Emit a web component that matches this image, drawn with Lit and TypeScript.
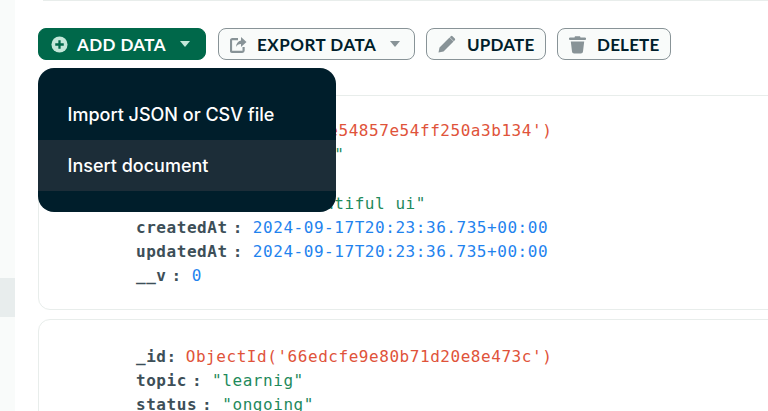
import { LitElement, html, css } from "lit";
import { customElement } from "lit/decorators.js";

type Row = { key: string; sep: string; value: string; kind: string };

const cards: { cls: string; rows: Row[] }[] = [
  {
    cls: "first",
    rows: [
      { key: "_id", sep: "tight", value: "ObjectId('66ede54857e54ff250a3b134')", kind: "oid" },
      { key: "topic", sep: "", value: '"learning ui"', kind: "str" },
      { key: "status", sep: "", value: '"ongoing"', kind: "str" },
      { key: "details", sep: "", value: '"make beautiful ui"', kind: "str" },
      { key: "createdAt", sep: "", value: "2024-09-17T20:23:36.735+00:00", kind: "num" },
      { key: "updatedAt", sep: "", value: "2024-09-17T20:23:36.735+00:00", kind: "num" },
      { key: "__v", sep: "", value: "0", kind: "num" },
    ],
  },
  {
    cls: "second",
    rows: [
      { key: "_id", sep: "tight", value: "ObjectId('66edcfe9e80b71d20e8e473c')", kind: "oid" },
      { key: "topic", sep: "", value: '"learnig"', kind: "str" },
      { key: "status", sep: "", value: '"ongoing"', kind: "str" },
    ],
  },
];

@customElement("app-root")
export class AppRoot extends LitElement {
  static styles = css`
    :host {
      display: block;
      width: 768px;
      height: 411px;
      overflow: hidden;
      background: #fff;
      font-family: "Lato", sans-serif;
    }
    .page { display: flex; height: 411px; overflow: hidden; }
    .side {
      flex: 0 0 15px;
      background: #f9fbfa;
      padding-top: 278px;
    }
    .side-band { height: 39px; background: #e8eded; }
    .main {
      flex: 1;
      min-width: 0;
      position: relative;
      padding: 0 0 0 23px;
      overflow: hidden;
    }
    .prev {
      height: 1px;
      margin-left: 5px;
      margin-right: -40px;
      background: #e8edeb;
    }
    .toolbar {
      display: flex;
      gap: 11px;
      margin-top: 27px;
      height: 32px;
      white-space: nowrap;
    }
    .btn {
      box-sizing: border-box;
      height: 32px;
      display: flex;
      align-items: center;
      border: 1px solid #889397;
      border-radius: 8px;
      background: #f9fbfa;
      color: #001e2b;
      font-size: 17px;
      font-weight: 700;
      letter-spacing: 0.2px;
      padding: 0 11px;
    }
    .btn svg { flex: none; display: block; }
    .btn .label { margin-left: 11px; }
    .btn .caret { margin-left: 14px; }
    .btn.add {
      width: 168px;
      background: #00684a;
      border-color: #00684a;
      color: #fff;
      padding-left: 12px;
      letter-spacing: 0.4px;
    }
    .btn.add .label { margin-left: 9px; }
    .btn.export { width: 197px; margin-left: 1px; letter-spacing: 0.5px; }
    .btn.export .label { margin-left: 10px; }
    .btn.update { width: 120px; }
    .btn.delete { width: 114px; }
    .menu {
      position: absolute;
      left: 23px;
      top: 68px;
      width: 298px;
      height: 144px;
      box-sizing: border-box;
      padding-top: 21px;
      border-radius: 16px;
      background: #001e2b;
      color: #fff;
      font-family: "Inter", sans-serif;
      font-size: 18px;
      font-weight: 500;
      z-index: 2;
    }
    .menu-item {
      height: 51px;
      display: flex;
      align-items: center;
      padding-left: 29.5px;
    }
    .menu-item.active { background: #1c2d38; }
    .cards {
      display: flex;
      flex-direction: column;
      gap: 9px;
      margin-top: 35px;
      margin-right: -40px;
    }
    .card {
      box-sizing: border-box;
      border: 1px solid #e8edeb;
      border-radius: 12px;
      padding: 23px 0 21px 97px;
      font-family: "DejaVu Sans Mono", monospace;
      font-size: 16px;
      letter-spacing: 0.55px;
      line-height: 24.2px;
      white-space: nowrap;
    }
    .card.second { padding-top: 24.6px; }
    .row { display: flex; height: 24.2px; }
    .key { font-weight: 700; color: #3d4f58; }
    .colon { font-weight: 700; color: #3d4f58; margin: 0 10px 0 5px; }
    .colon.tight { margin: 0 9px 0 0; }
    .oid { color: #e0533a; }
    .str { color: #1f8a5c; }
    .num { color: #1f83ee; }
  `;

  private caret(color: string) {
    return html`<svg class="caret" width="10" height="6" viewBox="0 0 10 6"><path d="M0 0h10L5 6z" fill=${color}></path></svg>`;
  }

  render() {
    const grey = "#889397";
    return html`
      <div class="page">
        <div class="side"><div class="side-band"></div></div>
        <div class="main">
          <div class="prev"></div>
          <div class="toolbar">
            <div class="btn add">
              <svg width="17" height="17" viewBox="0 0 18 18">
                <circle cx="9" cy="9" r="8.5" fill="#c3e7d9"></circle>
                <path d="M9 4.500v9M4.500 9h9" stroke="#00684a" stroke-width="2.400"></path>
              </svg>
              <span class="label">ADD DATA</span>
              ${this.caret("#c3e7d9")}
            </div>
            <div class="btn export">
              <svg width="17" height="17" viewBox="0 0 17 17">
                <path d="M11 1l5.500 5-5.500 5V8C8.500 8 7 9 6 11c.2-3.500 2-6 5-6.500z" fill=${grey}></path>
                <path d="M8 3.200H2.300a1.300 1.300 0 0 0-1.300 1.300v10a1.300 1.300 0 0 0 1.300 1.300h10a1.300 1.300 0 0 0 1.300-1.300V11" fill="none" stroke=${grey} stroke-width="2.200"></path>
              </svg>
              <span class="label">EXPORT DATA</span>
              ${this.caret(grey)}
            </div>
            <div class="btn update">
              <svg width="18" height="18" viewBox="0 0 18 18">
                <path d="M0.500 17.500l1-5L11.500 2.500l4 4-10 10zM12.800 1.200a1.200 1.200 0 0 1 1.700 0l2.300 2.300a1.200 1.200 0 0 1 0 1.700l-1 1-4-4z" fill=${grey}></path>
              </svg>
              <span class="label">UPDATE</span>
            </div>
            <div class="btn delete">
              <svg width="17" height="19" viewBox="0 0 17 19">
                <path d="M6 1.200h5L11.500 2.500H16a.8.8 0 0 1 0 2.500H1a.8.8 0 0 1 0-2.500h4.500z" fill=${grey}></path>
                <path d="M1.800 6.500h13.400L14 16.500c-.1 1.200-1 2-2.200 2H5.200c-1.200 0-2.100-.8-2.200-2z" fill=${grey}></path>
              </svg>
              <span class="label">DELETE</span>
            </div>
          </div>
          <div class="menu">
            <div class="menu-item">Import JSON or CSV file</div>
            <div class="menu-item active">Insert document</div>
          </div>
          <div class="cards">
            ${cards.map(
              (c) => html`<div class="card ${c.cls}">
                ${c.rows.map(
                  (r) => html`<div class="row">
                    <span class="key">${r.key}</span><span class="colon ${r.sep}">:</span><span class=${r.kind}>${r.value}</span>
                  </div>`
                )}
              </div>`
            )}
          </div>
        </div>
      </div>
    `;
  }
}
